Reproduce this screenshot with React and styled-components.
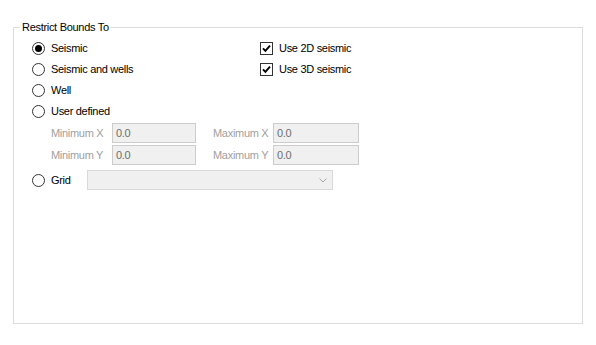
import React from 'react';
import styled, { createGlobalStyle } from 'styled-components';

const GlobalStyle = createGlobalStyle`
  html, body {
    margin: 0;
    padding: 0;
    background: #ffffff;
  }
  body {
    font-family: "Liberation Sans", Arial, sans-serif;
    font-size: 11px;
    letter-spacing: -0.3px;
    color: #000000;
  }
`;

const Page = styled.div`
  display: flex;
  flex-direction: column;
  box-sizing: border-box;
  width: 596px;
  height: 345px;
  padding: 21px 13px;
`;

const Group = styled.fieldset`
  flex: 1;
  margin: 0;
  padding: 0;
  min-width: 0;
  border: 1px solid #dcdcdc;
`;

const Legend = styled.legend`
  margin-left: 6px;
  padding: 0 2px;
  line-height: 13px;
`;

const Body = styled.div`
  padding: 4px 0 0 18px;
`;

const TopArea = styled.div`
  display: grid;
  grid-template-columns: 228px 1fr;
`;

const Column = styled.div`
  display: flex;
  flex-direction: column;
`;

const OptionRow = styled.label`
  display: flex;
  align-items: center;
  gap: 6px;
  height: 21px;
  line-height: 13px;
`;

const RadioCircle = styled.span`
  position: relative;
  box-sizing: border-box;
  flex: none;
  width: 13px;
  height: 13px;
  border: 1px solid #333333;
  border-radius: 50%;
  background: #ffffff;

  &::after {
    content: '';
    display: ${({ $checked }) => ($checked ? 'block' : 'none')};
    position: absolute;
    left: 2px;
    top: 2px;
    width: 7px;
    height: 7px;
    border-radius: 50%;
    background: #000000;
  }
`;

const CheckBox = styled.span`
  box-sizing: border-box;
  flex: none;
  display: flex;
  align-items: center;
  justify-content: center;
  width: 13px;
  height: 13px;
  border: 1px solid #333333;
  background: #ffffff;
`;

const FieldRow = styled.div`
  display: flex;
  align-items: center;
  height: 22px;
  padding-left: 19px;
`;

const FieldLabel = styled.span`
  width: ${({ $w }) => $w}px;
  color: #a0a0a0;
  line-height: 13px;
`;

const TextBox = styled.div`
  box-sizing: border-box;
  width: ${({ $w }) => $w}px;
  height: 20px;
  margin-right: ${({ $gap }) => $gap || 0}px;
  padding: 0 3px;
  display: flex;
  align-items: center;
  background: #f0f0f0;
  border: 1px solid #cccccc;
  color: #6d6d6d;
`;

const GridRow = styled.div`
  display: flex;
  align-items: center;
  height: 20px;
  margin-top: 4px;
`;

const GridLabel = styled(OptionRow)`
  width: 55px;
  height: 20px;
`;

const Combo = styled.div`
  box-sizing: border-box;
  width: 246px;
  height: 20px;
  display: flex;
  align-items: center;
  justify-content: flex-end;
  padding-right: 5px;
  background: #f0f0f0;
  border: 1px solid #d9d9d9;
`;

const Radio = ({ checked, children }) => (
  <OptionRow>
    <RadioCircle $checked={checked} />
    {children}
  </OptionRow>
);

const Check = ({ children }) => (
  <OptionRow>
    <CheckBox>
      <svg width="11" height="11" viewBox="0 0 11 11">
        <path d="M2 5.3 L4.4 7.8 L9 2.6" fill="none" stroke="#000" strokeWidth="1.9" />
      </svg>
    </CheckBox>
    {children}
  </OptionRow>
);

export default function App() {
  return (
    <>
      <GlobalStyle />
      <Page>
        <Group>
          <Legend>Restrict Bounds To</Legend>
          <Body>
            <TopArea>
              <Column>
                <Radio checked>Seismic</Radio>
                <Radio>Seismic and wells</Radio>
                <Radio>Well</Radio>
                <Radio>User defined</Radio>
              </Column>
              <Column>
                <Check>Use 2D seismic</Check>
                <Check>Use 3D seismic</Check>
              </Column>
            </TopArea>
            <FieldRow>
              <FieldLabel $w={61}>Minimum X</FieldLabel>
              <TextBox $w={84} $gap={17}>0.0</TextBox>
              <FieldLabel $w={60}>Maximum X</FieldLabel>
              <TextBox $w={86}>0.0</TextBox>
            </FieldRow>
            <FieldRow>
              <FieldLabel $w={61}>Minimum Y</FieldLabel>
              <TextBox $w={84} $gap={17}>0.0</TextBox>
              <FieldLabel $w={60}>Maximum Y</FieldLabel>
              <TextBox $w={86}>0.0</TextBox>
            </FieldRow>
            <GridRow>
              <GridLabel as="div">
                <RadioCircle />
                Grid
              </GridLabel>
              <Combo>
                <svg width="8" height="5" viewBox="0 0 8 5">
                  <path d="M0.5 0.5 L4 4 L7.5 0.5" fill="none" stroke="#a8a8a8" strokeWidth="1" />
                </svg>
              </Combo>
            </GridRow>
          </Body>
        </Group>
      </Page>
    </>
  );
}
